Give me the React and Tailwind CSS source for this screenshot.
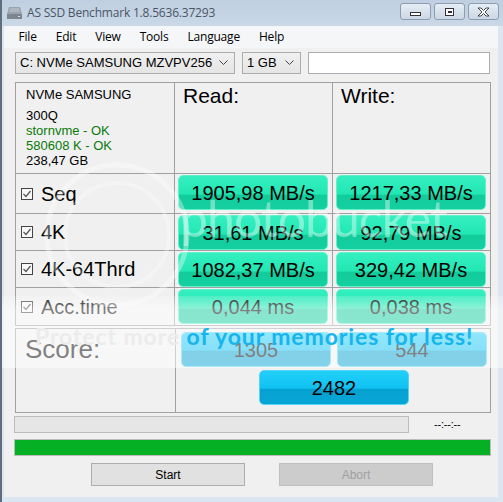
import React from 'react';

const green =
  'bg-[linear-gradient(to_bottom,#35efc1_0%,#22e7b3_55%,#12cc9c_58%,#14cfa0_100%)] border border-[#62f0c9]';
const blue =
  'bg-[linear-gradient(to_bottom,#22cff8_0%,#10c2f2_52%,#05a1d1_55%,#07a5d5_100%)] border border-[#55d3f6]';

const rows = [
  { label: 'Seq', read: '1905,98 MB/s', write: '1217,33 MB/s', h: 'h-[39px]' },
  { label: '4K', read: '31,61 MB/s', write: '92,79 MB/s', h: 'h-[36px]' },
  { label: '4K-64Thrd', read: '1082,37 MB/s', write: '329,42 MB/s', h: 'h-[36px]' },
  { label: 'Acc.time', read: '0,044 ms', write: '0,038 ms', h: 'h-[37px]' },
];

function Check() {
  return (
    <div className="w-[12px] h-[12px] border border-[#444] bg-[#f8f8f8] flex items-center justify-center">
      <svg width="10" height="10" viewBox="0 0 10 10">
        <path d="M1.5 5 L4 7.5 L8.5 2" fill="none" stroke="#555" strokeWidth="1.2" />
      </svg>
    </div>
  );
}

function Chevron() {
  return (
    <svg width="9" height="6" viewBox="0 0 9 6">
      <path d="M0.5 0.5 L4.5 4.5 L8.5 0.5" fill="none" stroke="#444" strokeWidth="1" />
    </svg>
  );
}

function ValueBox({ text }) {
  return (
    <div className={`w-[150px] h-[35px] rounded-[5px] ${green} flex items-center justify-center text-[20px] text-black`}>
      {text}
    </div>
  );
}

function WinButton({ children }) {
  return (
    <div className="w-[31px] h-[17px] rounded-[3px] border border-[#8c9db2] bg-[linear-gradient(to_bottom,#e6edf5,#cbd7e4)] flex items-center justify-center">
      {children}
    </div>
  );
}

export default function App() {
  return (
    <div className="relative w-[503px] h-[502px] overflow-hidden bg-[#dce6f1] border-l-2 border-l-[#5f6d7c] font-['Liberation_Sans',Arial,sans-serif]">
      {/* title bar */}
      <div className="h-[26px] flex items-center bg-[linear-gradient(to_bottom,#bfcfe1,#cad8e7)]">
        <svg className="ml-[4px]" width="17" height="14" viewBox="0 0 17 14">
          <path d="M3 1 H14 L16 8 H1 Z" fill="#9aa3ad" />
          <rect x="1" y="8" width="15" height="5" fill="#7d8690" />
          <path d="M4 3 H13 M3.5 5 H13.5" stroke="#c3c9cf" strokeWidth="1" />
          <rect x="12" y="10" width="2" height="1" fill="#d8dde2" />
        </svg>
        <span className="ml-[4px] text-[12px] text-[#4b5563] font-['Open_Sans',sans-serif] tracking-[-0.2px]">
          AS SSD Benchmark 1.8.5636.37293
        </span>
        <div className="ml-auto mr-[4px] flex gap-[3px] -mt-[3px]">
          <WinButton>
            <div className="w-[11px] h-[4px] border border-[#333] bg-white mt-[4px]" />
          </WinButton>
          <WinButton>
            <div className="w-[9px] h-[8px] border border-[#333] bg-white flex items-center justify-center">
              <div className="w-[4px] h-[2px] border border-[#333]" />
            </div>
          </WinButton>
          <WinButton>
            <svg width="13" height="10" viewBox="0 0 13 10">
              <path d="M1 1 H4 L6.5 3.5 L9 1 H12 L8 5 L12 9 H9 L6.5 6.5 L4 9 H1 L5 5 Z" fill="#fff" stroke="#333" strokeWidth="0.9" />
            </svg>
          </WinButton>
        </div>
      </div>

      {/* client area */}
      <div className="ml-[2px] mr-[5px] h-[471px] bg-[#f0f0f0]">
        {/* menu */}
        <div className="h-[22px] bg-[#f5f6f8] flex items-center pl-[5px] text-[12px] text-black font-['Open_Sans',sans-serif] tracking-[-0.2px]">
          {['File', 'Edit', 'View', 'Tools', 'Language', 'Help'].map((m) => (
            <span key={m} className="px-[9.5px]">{m}</span>
          ))}
        </div>

        {/* combo row */}
        <div className="mt-[4px] ml-[11px] flex gap-[7px] h-[22px] text-[13px]">
          <div className="w-[220px] border border-[#acacac] bg-[linear-gradient(to_bottom,#f0f0f0,#e5e5e5)] flex items-center pl-[4px] pr-[6px]">
            <span>C: NVMe SAMSUNG MZVPV256</span>
            <span className="ml-auto"><Chevron /></span>
          </div>
          <div className="w-[59px] border border-[#acacac] bg-[linear-gradient(to_bottom,#f0f0f0,#e5e5e5)] flex items-center pl-[4px] pr-[6px]">
            <span>1 GB</span>
            <span className="ml-auto"><Chevron /></span>
          </div>
          <div className="w-[182px] border border-[#abadb3] bg-white" />
        </div>

        {/* result table */}
        <div className="mt-[8px] ml-[11px] w-[476px] grid grid-cols-[158px_157px_157px] gap-px bg-[#a0a0a0] border border-[#a0a0a0]">
          <div className="h-[90px] bg-[#f0f0f0] pl-[10px] pt-[4px] text-[13px] leading-[15px]">
            <div>NVMe SAMSUNG</div>
            <div className="mt-[6px]">300Q</div>
            <div className="text-[#0a7a0a]">stornvme - OK</div>
            <div className="text-[#0a7a0a]">580608 K - OK</div>
            <div>238,47 GB</div>
          </div>
          <div className="bg-[#f0f0f0] pl-[8px] pt-[1px] text-[21px] leading-[24px]">Read:</div>
          <div className="bg-[#f0f0f0] pl-[8px] pt-[1px] text-[21px] leading-[24px]">Write:</div>
          {rows.map((r) => (
            <React.Fragment key={r.label}>
              <div className={`${r.h} bg-[#f0f0f0] flex items-center pl-[5px] gap-[8px] text-[20px]`}>
                <Check />
                <span>{r.label}</span>
              </div>
              <div className={`${r.h} bg-[#f0f0f0] pl-[3px] pt-[1px]`}>
                <ValueBox text={r.read} />
              </div>
              <div className={`${r.h} bg-[#f0f0f0] pl-[3px] pt-[1px]`}>
                <ValueBox text={r.write} />
              </div>
            </React.Fragment>
          ))}
        </div>

        {/* score table */}
        <div className="mt-[2px] ml-[11px] w-[476px] h-[85px] grid grid-cols-[159px_314px] gap-px bg-[#a0a0a0] border border-[#a0a0a0]">
          <div className="bg-[#f0f0f0] pl-[9px] pt-[5px] text-[26px] leading-[30px]">Score:</div>
          <div className="bg-[#f0f0f0] pt-[3px]">
            <div className="flex gap-[6px] pl-[5px]">
              <div className={`w-[150px] h-[35px] rounded-[5px] ${blue} flex items-center justify-center text-[20px]`}>1305</div>
              <div className={`w-[150px] h-[35px] rounded-[5px] ${blue} flex items-center justify-center text-[20px]`}>544</div>
            </div>
            <div className={`mt-[3px] ml-[83px] w-[150px] h-[35px] rounded-[5px] ${blue} flex items-center justify-center text-[20px]`}>
              2482
            </div>
          </div>
        </div>

        {/* progress */}
        <div className="mt-[3px] ml-[10px] flex items-center">
          <div className="w-[395px] h-[17px] border border-[#bcbcbc] bg-[#e6e6e6]" />
          <span className="ml-[25px] text-[11px] tracking-[-0.2px]">--:--:--</span>
        </div>
        <div className="mt-[6px] ml-[10px] w-[477px] h-[17px] border border-[#bcbcbc] bg-[#06b025]" />

        {/* buttons */}
        <div className="mt-[7px] flex text-[12px]">
          <div className="ml-[87px] w-[154px] h-[23px] border border-[#adadad] bg-[#e1e1e1] flex items-center justify-center">Start</div>
          <div className="ml-[34px] w-[154px] h-[23px] border border-[#bfbfbf] bg-[#cccccc] text-[#a0a0a0] flex items-center justify-center">Abort</div>
        </div>
      </div>

      {/* photobucket watermark */}
      <div className="absolute left-[40px] top-[160px] pointer-events-none">
        <svg width="150" height="150" viewBox="0 0 150 150">
          <circle cx="75" cy="75" r="70" fill="none" stroke="rgba(255,255,255,0.35)" strokeWidth="5" />
          <circle cx="75" cy="75" r="52" fill="none" stroke="rgba(255,255,255,0.3)" strokeWidth="4" />
        </svg>
      </div>
      <div className="absolute left-[178px] top-[188px] text-[50px] leading-[60px] font-['Lato',sans-serif] text-white/40 pointer-events-none tracking-[-1px]">
        photobucket
      </div>
      <div className="absolute left-0 top-[296px] w-[503px] h-[72px] bg-[linear-gradient(to_bottom,rgba(255,255,255,0.15),rgba(255,255,255,0.5)_18%,rgba(255,255,255,0.5))] pointer-events-none" />
      <div className="absolute left-[33px] top-[319px] text-[23px] font-bold font-['Lato',sans-serif] whitespace-nowrap pointer-events-none tracking-[0.9px]">
        <span className="text-[#ececec]">Protect more </span>
        <span className="text-[#18b5ec]">of your memories for less!</span>
      </div>
    </div>
  );
}
